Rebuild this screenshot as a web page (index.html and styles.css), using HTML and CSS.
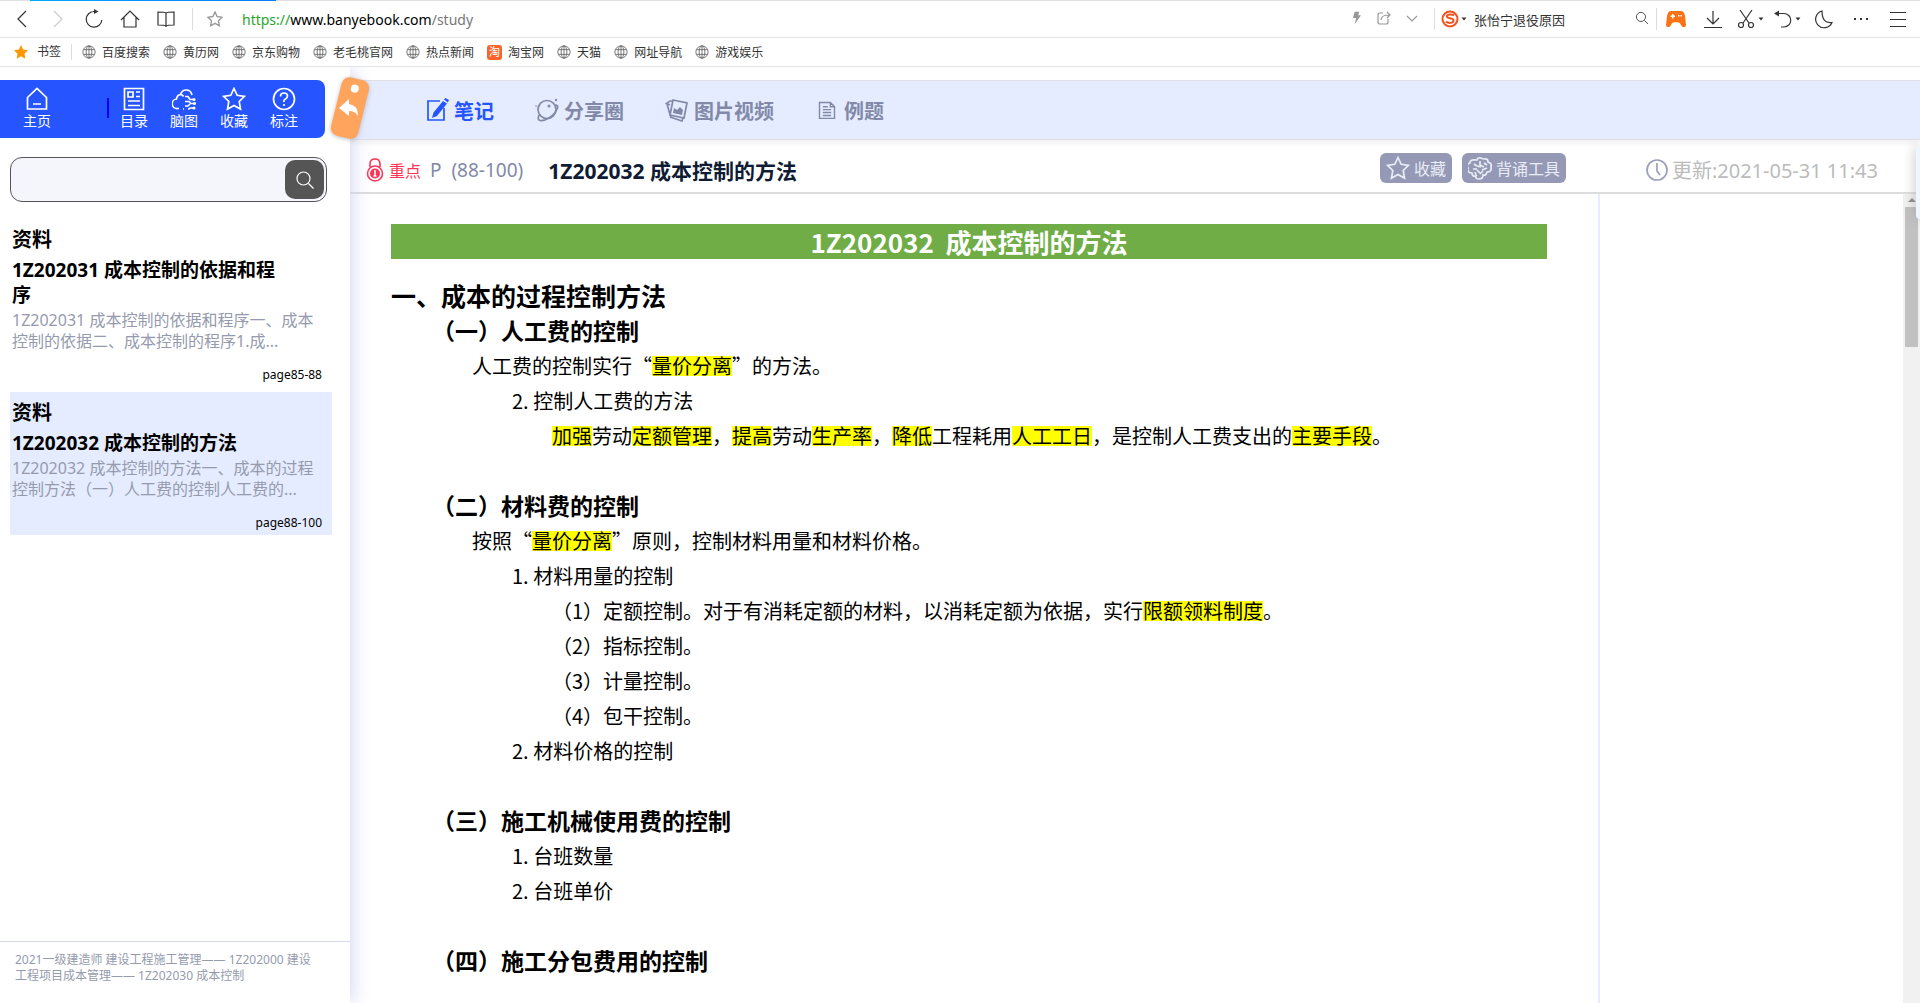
FILE: index.html
```html
<!DOCTYPE html>
<html lang="zh-CN">

<head>
    <meta charset="UTF-8">
    <title>1Z202032 成本控制的方法</title>
    <link rel="stylesheet" href="styles.css">
</head>

<body>

    <!-- shared icons -->
    <svg class="sprite" aria-hidden="true">
        <symbol id="globe" viewBox="0 0 16 16">
            <circle cx="8" cy="8" r="7" />
            <ellipse cx="8" cy="8" rx="3.3" ry="7" />
            <path d="M8 1v14M1.8 5.3h12.4M1.8 10.7h12.4" />
        </symbol>
        <symbol id="star" viewBox="0 0 24 24">
            <path d="M12 1.5l3.2 6.8 7.3 1-5.3 5.2 1.3 7.6-6.5-3.6-6.5 3.6 1.3-7.6L1.5 9.3l7.3-1z" />
        </symbol>
        <symbol id="search" viewBox="0 0 20 20">
            <circle cx="8.5" cy="8.5" r="6.5" />
            <path d="M13.5 13.5l5 5" />
        </symbol>
        <symbol id="caret" viewBox="0 0 6 4">
            <path d="M0.5 0.5h5L3 3.5z" />
        </symbol>
    </svg>

    <header class="browser">
        <div class="loading"></div>
        <div class="toolbar">
            <button class="tool" aria-label="后退"><svg class="icon" viewBox="0 0 20 20"><path d="M14 2L6 10l8 8" /></svg></button>
            <button class="tool off" aria-label="前进"><svg class="icon" viewBox="0 0 20 20"><path d="M6 2l8 8-8 8" /></svg></button>
            <button class="tool" aria-label="刷新"><svg class="icon" viewBox="0 0 20 20"><path d="M10 2.5a7.8 7.8 0 1 0 7.8 8.5M9 2.5h4" /><path class="fill" d="M10 0l4.5 2.5L10 5z" /></svg></button>
            <button class="tool" aria-label="主页"><svg class="icon" viewBox="0 0 20 20"><path d="M1 11l9-9 9 9M4 8.5v9.5h12V8.5" /></svg></button>
            <button class="tool" aria-label="阅读"><svg class="icon" viewBox="0 0 20 20"><path d="M10 4c-1-1-2-1-8-1v13c6 0 7 0 8 1 1-1 2-1 8-1V3c-6 0-7 0-8 1zv14" /></svg></button>
            <span class="line"></span>
            <button class="tool pale" aria-label="收藏本页"><svg class="icon small"><use href="#star" /></svg></button>
            <div class="url"><span class="scheme">https://</span>www.banyebook.com<span class="path">/study</span></div>
            <button class="mini" aria-label="极速"><svg class="bolt" viewBox="0 0 10 14"><path d="M3 0h5L7 4h3L3 14l1.5-7H1z" /></svg></button>
            <button class="mini pale" aria-label="分享"><svg class="icon mid" viewBox="0 0 14 14"><path d="M6 2H3Q1 2 1 4v7q0 2 2 2h6q2 0 2-2V8M4 9q0-5 8-5M10 1l3 3-3 3" /></svg></button>
            <button class="mini pale" aria-label="更多"><svg class="icon mid" viewBox="0 0 14 14"><path d="M2 5l5 5 5-5" /></svg></button>
            <span class="line"></span>
            <svg class="sogou" viewBox="0 0 18 18"><circle cx="9" cy="9" r="7.5" /><path d="M13 5.5c-2-1.5-7-1.5-7 1s6.5 1 6.5 4-5.5 3-7.5 1" /></svg>
            <svg class="caret"><use href="#caret" /></svg>
            <input class="websearch" type="text" value="张怡宁退役原因" aria-label="网页搜索">
            <button class="mini" aria-label="搜索"><svg class="icon mid"><use href="#search" /></svg></button>
            <span class="line tight"></span>
            <button class="ext" aria-label="游戏"><svg class="game" viewBox="0 0 20 16"><path d="M5 0h10q3 0 4 5l1 9q0 2-3 2-1 0-2-2-1-3-5-3t-5 3q-1 2-2 2-3 0-3-2l1-9q1-5 4-5z" /><path class="white" d="M6 3h1.5v1.5H9V6H7.5v1.500H6V6H4.500V4.500H6zM12 4h1.500v1.500H12zM14.500 4H16v1.500h-1.500z" /></svg></button>
            <button class="ext" aria-label="下载"><svg class="icon" viewBox="0 0 20 20"><path d="M10 2v13M4 9l6 6 6-6M1 18.500h18" /></svg></button>
            <button class="ext" aria-label="截图"><svg class="icon" viewBox="0 0 20 20"><path d="M4 1l9 13M16 1L7 14" /><circle cx="5" cy="16" r="2.5" /><circle cx="15" cy="16" r="2.5" /></svg><svg class="caret"><use href="#caret" /></svg></button>
            <button class="ext" aria-label="恢复"><svg class="icon" viewBox="0 0 20 20"><path d="M3 4.500h8a6.500 6.500 0 0 1 0 13.500H8" /><path class="fill" d="M6 1.500v6L1 4.500z" /></svg><svg class="caret"><use href="#caret" /></svg></button>
            <button class="ext" aria-label="夜间"><svg class="icon" viewBox="0 0 20 20"><path d="M8 2a8.500 8.500 0 1 0 10 11.500Q8 15 8 2z" /></svg></button>
            <button class="ext" aria-label="扩展"><svg class="icon dots" viewBox="0 0 20 20"><path d="M3 9h2v2H3zM9 9h2v2H9zM15 9h2v2h-2z" /></svg></button>
            <button class="ext" aria-label="菜单"><svg class="icon" viewBox="0 0 20 20"><path d="M2 3.500h16M2 10.500h16M2 17.500h16" /></svg></button>
        </div>
        <nav class="bookmarks">
            <a href="#" class="first"><svg class="favstar"><use href="#star" /></svg>书签</a>
            <a href="#"><svg class="icon globe"><use href="#globe" /></svg>百度搜索</a>
            <a href="#"><svg class="icon globe"><use href="#globe" /></svg>黄历网</a>
            <a href="#"><svg class="icon globe"><use href="#globe" /></svg>京东购物</a>
            <a href="#"><svg class="icon globe"><use href="#globe" /></svg>老毛桃官网</a>
            <a href="#"><svg class="icon globe"><use href="#globe" /></svg>热点新闻</a>
            <a href="#"><span class="taobao">淘</span>淘宝网</a>
            <a href="#"><svg class="icon globe"><use href="#globe" /></svg>天猫</a>
            <a href="#"><svg class="icon globe"><use href="#globe" /></svg>网址导航</a>
            <a href="#"><svg class="icon globe"><use href="#globe" /></svg>游戏娱乐</a>
        </nav>
    </header>

    <div class="app">
        <aside class="sidebar">
            <nav class="menu">
                <a href="#" class="home"><svg class="icon" viewBox="0 0 24 24"><path d="M2.500 10.500L12 1.500l9.500 9V22h-19zM8 17h8" /></svg>主页</a>
                <span class="split"></span>
                <a href="#"><svg class="icon" viewBox="0 0 24 24"><path d="M2.500 1.500h19v21h-19zM6 5h5v5H6zM14 5h4M14 9.500h4M6 14h12M6 18.500h12" /></svg>目录</a>
                <a href="#"><svg class="icon" viewBox="0 0 24 24"><path d="M7 21.500H5.500a4.700 4.700 0 0 1-1-9.500Q5 8 8.500 7.500 10 3 14 3q5 0 6 5M8.500 7.500q2 0 3 2M13 9.500h3l2 3h3M13 14.500h4l2 2h3M13 19h3l2-2M11 22h1M16 22h1l1-1h3" /><circle cx="22" cy="12.500" r="0.700" /><circle cx="22.500" cy="16.500" r="0.700" /><circle cx="22" cy="21" r="0.700" /></svg>脑图</a>
                <a href="#"><svg class="icon"><use href="#star" /></svg>收藏</a>
                <a href="#"><svg class="icon" viewBox="0 0 24 24"><circle cx="12" cy="12" r="10.500" /><path d="M8.500 9.500q0-3.500 3.500-3.500t3.500 3q0 2-2 3T12 15M12 17v2" /></svg>标注</a>
            </nav>

            <form class="search">
                <input type="text" aria-label="搜索资料">
                <button type="button" aria-label="搜索"><svg class="icon"><use href="#search" /></svg></button>
            </form>

            <div class="list">
                <article class="item">
                    <h3>资料</h3>
                    <h4>1Z202031 成本控制的依据和程序</h4>
                    <p>1Z202031 成本控制的依据和程序一、成本控制的依据二、成本控制的程序1.成...</p>
                    <span class="page">page85-88</span>
                </article>
                <article class="item active">
                    <h3>资料</h3>
                    <h4>1Z202032 成本控制的方法</h4>
                    <p>1Z202032 成本控制的方法一、成本的过程控制方法（一）人工费的控制人工费的...</p>
                    <span class="page">page88-100</span>
                </article>
            </div>

            <footer class="crumbs">2021一级建造师 建设工程施工管理—— 1Z202000 建设工程项目成本管理—— 1Z202030 成本控制</footer>

            <button class="tag" aria-label="收起">
                <svg viewBox="0 0 40 64">
                    <g transform="rotate(14 20 32)">
                        <rect class="body" x="6" y="2" width="28" height="60" rx="8" />
                        <circle class="white" cx="20" cy="12" r="4" />
                    </g>
                    <path class="white" d="M9 32l10-9v5q9 1 9 12-3-5-9-5v5z" />
                </svg>
            </button>
        </aside>

        <main class="main">
            <nav class="tabs">
                <a href="#" class="active"><svg class="icon" viewBox="0 0 24 24"><path d="M15 3H3v19h16V10" /><path class="fill" d="M18 3l4 2.500L12 18l-5 2 1.500-5.500zM19 1.500l1.500-1.500 3.500 2-1.200 2.500z" /></svg>笔记</a>
                <a href="#"><svg class="icon" viewBox="0 0 24 24"><circle cx="12" cy="11.500" r="9" /><path d="M20 7q4 0 2 4-2 5-8 9-7 4-10 2-2-2 1-6" /><circle class="fill" cx="14" cy="8" r="1.500" /><circle class="fill" cx="21" cy="2" r="1.200" /><circle class="fill" cx="1" cy="8" r="0.800" /></svg>分享圈</a>
                <a href="#"><svg class="icon" viewBox="0 0 24 24"><path d="M8 2l14 3-3 15-14-3zM5 7L1.500 5.500 5 3h2M2 6l4 14M5 19l12 4 1-3" /><path class="fill" d="M8 15l1-5 3 2 3-3 3 3-1 5z" /></svg>图片视频</a>
                <a href="#"><svg class="icon page-icon" viewBox="0 0 24 24"><path d="M3 3h13l5 5v14H3zM16 3v5h5M7 8h6M7 11.500h10M7 15h10M7 18.500h10" /></svg>例题</a>
            </nav>

            <div class="titlebar">
                <svg class="lock" viewBox="0 0 20 24"><path d="M5 9V6q0-5 5-5t5 5v3" /><circle cx="10" cy="15.500" r="7.500" /><circle class="fill" cx="10" cy="15.500" r="5" /><path class="bar" d="M9 13h1v5M8.500 18h3" /></svg>
                <span class="key">重点</span>
                <span class="pages">P&nbsp; (88-100)</span>
                <h1>1Z202032 成本控制的方法</h1>
                <button class="pill"><svg class="icon"><use href="#star" /></svg>收藏</button>
                <button class="pill"><svg class="icon" viewBox="0 0 24 24"><path d="M9 4q1-3 3.500-2T16 3q4-1 4 3 4 1 3 5 1 5-4 5-1 4-4 3 0 4-4 4t-3-3q-4 1-4-3-5 0-4-5-2-4 2-5 0-4 6-3zM6 8l3 2M5 13h4M12 5v4l4 2M9 14l3 3M14 14l5-2M16 7l3 2M12 18l3-3M9 10l4 1M7 16l1 3" /></svg>背诵工具</button>
                <div class="updated"><svg class="icon" viewBox="0 0 24 24"><circle cx="12" cy="12" r="10" /><path d="M12 5v8l3 4" /></svg>更新:2021-05-31 11:43</div>
            </div>

            <div class="reader">
                <div class="note">
                    <h2>1Z202032&nbsp; 成本控制的方法</h2>
                    <h3>一、成本的过程控制方法</h3>
                    <h4>（一）人工费的控制</h4>
                    <p>人工费的控制实行“<mark>量价分离</mark>”的方法。</p>
                    <p class="in1">2. 控制人工费的方法</p>
                    <p class="in2"><mark>加强</mark>劳动<mark>定额管理</mark>，<mark>提高</mark>劳动<mark>生产率</mark>，<mark>降低</mark>工程耗用<mark>人工工日</mark>，是控制人工费支出的<mark>主要手段</mark>。</p>
                    <h4 class="next">（二）材料费的控制</h4>
                    <p>按照“<mark>量价分离</mark>”原则，控制材料用量和材料价格。</p>
                    <p class="in1">1. 材料用量的控制</p>
                    <p class="in2">（1）定额控制。对于有消耗定额的材料，以消耗定额为依据，实行<mark>限额领料制度</mark>。</p>
                    <p class="in2">（2）指标控制。</p>
                    <p class="in2">（3）计量控制。</p>
                    <p class="in2">（4）包干控制。</p>
                    <p class="in1">2. 材料价格的控制</p>
                    <h4 class="next">（三）施工机械使用费的控制</h4>
                    <p class="in1">1. 台班数量</p>
                    <p class="in1">2. 台班单价</p>
                    <h4 class="next">（四）施工分包费用的控制</h4>
                </div>
                <div class="margin"></div>
                <div class="scrollbar"><span class="up"></span><span class="thumb"></span></div>
            </div>
            <div class="drawer"></div>
        </main>
    </div>

</body>

</html>
```
FILE: styles.css
```css
* {
    box-sizing: border-box;
}

body {
    margin: 0;
    height: 100vh;
    display: flex;
    flex-direction: column;
    overflow: hidden;
    font-family: "Noto Sans", "Noto Sans CJK SC", sans-serif;
    color: #000;
    background: #fff;
}

h1, h2, h3, h4, p {
    margin: 0;
}

a {
    color: inherit;
    text-decoration: none;
}

button {
    border: none;
    background: none;
    padding: 0;
    font-family: inherit;
    color: inherit;
    cursor: pointer;
}

.sprite {
    display: none;
}

.icon {
    width: 20px;
    height: 20px;
    fill: none;
    stroke: currentColor;
    stroke-width: 1.2;
    flex: none;
}

.fill {
    fill: currentColor;
    stroke: none;
}

.white {
    fill: #fff;
}

/* browser bar */
.browser {
    flex: none;
    border-bottom: 1px solid #e3e3e3;
}

.loading {
    height: 1px;
    background: linear-gradient(90deg, #00a8ff, #0a7cff) 30px 0 / 246px 1px no-repeat #e0e0e0;
}

.toolbar {
    height: 37px;
    display: flex;
    align-items: center;
    padding: 0 4px;
    border-bottom: 1px solid #e3e3e3;
    color: #333;
}

.tool {
    width: 36px;
    height: 20px;
    display: flex;
    justify-content: center;
}

.off {
    color: #ccc;
}

.pale {
    color: #999;
}

.line {
    width: 1px;
    height: 22px;
    margin: 0 4px 0 8px;
    background: #ddd;
}

.tight {
    margin: 0;
}

.small {
    width: 16px;
    height: 16px;
    margin-top: 2px;
    stroke-width: 2;
}

.url {
    flex: 1;
    font-size: 14px;
    color: #000;
    margin-left: 9px;
}

.scheme {
    color: #2ba52b;
}

.path {
    color: #777;
}

.mini {
    width: 28px;
    height: 16px;
    display: flex;
    justify-content: center;
}

.mid {
    width: 14px;
    height: 14px;
}

.bolt {
    width: 9px;
    height: 14px;
    fill: #999;
}

.sogou {
    width: 18px;
    height: 18px;
    margin-left: 2px;
    fill: none;
    stroke: #f4511e;
    stroke-width: 2;
}

.caret {
    width: 6px;
    height: 4px;
    margin-left: 2px;
    fill: #333;
}

.websearch {
    width: 154px;
    border: none;
    padding: 0;
    margin-left: 7px;
    font: 13px "Noto Sans CJK SC", sans-serif;
    color: #333;
}

.ext {
    width: 37px;
    height: 20px;
    display: flex;
    align-items: center;
    justify-content: center;
}

.game {
    width: 20px;
    height: 16px;
    fill: #f97316;
}

.dots {
    fill: #333;
    stroke: none;
}

.bookmarks {
    height: 28px;
    display: flex;
    align-items: center;
    gap: 13px;
    padding-left: 13px;
    font-size: 12px;
    color: #333;
}

.bookmarks a {
    display: flex;
    align-items: center;
    gap: 6px;
}

.bookmarks .first {
    gap: 8px;
    padding-right: 10px;
    margin-right: -3px;
    border-right: 1px solid #ddd;
    line-height: 16px;
}

.favstar {
    width: 16px;
    height: 16px;
    fill: #ff9800;
}

.globe {
    width: 14px;
    height: 14px;
    color: #666;
    stroke-width: 1;
}

.taobao {
    width: 15px;
    height: 15px;
    border-radius: 3px;
    background: #f9632c;
    color: #fff;
    font-size: 11px;
    line-height: 14px;
    text-align: center;
}

/* page */
.app {
    flex: 1;
    min-height: 0;
    display: flex;
}

.sidebar {
    position: relative;
    z-index: 2;
    width: 350px;
    flex: none;
    display: flex;
    flex-direction: column;
    padding-top: 13px;
    background: #fff;
    box-shadow: 0 0 20px #c9cef0;
    clip-path: inset(0 -24px 0 0);
}

.menu {
    height: 58px;
    width: 325px;
    display: flex;
    align-items: center;
    padding: 0 0 2px 12px;
    background: #2655ff;
    border-radius: 0 8px 8px 0;
    color: #fff;
    font-size: 14px;
    line-height: 18px;
}

.menu a {
    width: 50px;
    display: flex;
    flex-direction: column;
    align-items: center;
    gap: 1px;
}

.menu .icon {
    width: 24px;
    height: 24px;
    stroke-width: 1.7;
}

.split {
    width: 2px;
    height: 20px;
    margin: 0 0 0 45px;
    background: #0000ff;
}

.search {
    display: flex;
    margin: 19px 23px 0 10px;
    height: 45px;
    padding: 2px;
    border: 1px solid #555;
    border-radius: 12px;
    background: #f4f6fb;
}

.search input {
    flex: 1;
    min-width: 0;
    border: none;
    outline: none;
    background: none;
    padding: 0 10px;
    font-size: 16px;
}

.search button {
    width: 39px;
    height: 39px;
    border-radius: 10px;
    background: #555;
    color: #fff;
    display: flex;
    align-items: center;
    justify-content: center;
}

.list {
    flex: 1;
    margin: 17px 18px 0 10px;
    display: flex;
    flex-direction: column;
    gap: 5px;
}

.item {
    display: flex;
    flex-direction: column;
    padding: 5px 10px 3px 2px;
}

.item.active {
    background: #e5ecff;
}

.item h3 {
    font-size: 20px;
    line-height: 32px;
}

.item h4 {
    font-size: 19px;
    line-height: 25px;
    width: 280px;
    padding: 2px 0;
}

.item p {
    font-size: 16px;
    line-height: 21px;
    color: #959bad;
    margin-bottom: 14px;
}

.page {
    align-self: flex-end;
    font-size: 12px;
    line-height: 18px;
}

.crumbs {
    border-top: 1px solid #d5d8ea;
    padding: 10px 31px 19px 15px;
    font-size: 12px;
    line-height: 16px;
    color: #959bad;
}

.tag {
    position: absolute;
    left: 330px;
    top: 9px;
    width: 40px;
    height: 64px;
}

.tag svg {
    width: 40px;
    height: 64px;
    overflow: visible;
    filter: drop-shadow(0 1px 2px #bbb);
}

.tag .body {
    fill: #ffa45c;
}

.main {
    position: relative;
    flex: 1;
    min-width: 0;
    display: flex;
    flex-direction: column;
    padding-top: 13px;
}

.tabs {
    height: 60px;
    flex: none;
    display: flex;
    align-items: center;
    gap: 41px;
    padding-left: 75px;
    border-top: 1px solid #dfe0e4;
    border-bottom: 1px solid #dfe0e4;
    background: #e5ecff;
    box-shadow: 0 4px 4px #f3f3f3;
    font-size: 20px;
    font-weight: bold;
    color: #8289a8;
}

.tabs a {
    display: flex;
    align-items: center;
    gap: 5px;
}

.tabs .active {
    color: #2655ff;
}

.tabs .icon {
    width: 24px;
    height: 24px;
    stroke-width: 1.7;
}

.tabs .page-icon {
    height: 20px;
}

.titlebar {
    height: 47px;
    flex: none;
    margin-top: 7px;
    padding: 0 42px 0 15px;
    display: flex;
    align-items: center;
    border-bottom: 2px solid #ddd;
}

.lock {
    width: 20px;
    height: 24px;
    fill: none;
    stroke: #ff3355;
    stroke-width: 1.6;
}

.lock .fill {
    fill: #ff3355;
}

.lock .bar {
    stroke: #fff;
}

.key {
    margin-left: 4px;
    font-size: 16px;
    color: #ff3355;
}

.pages {
    margin-left: 9px;
    font-size: 19px;
    color: #8289a8;
}

.titlebar h1 {
    flex: 1;
    margin-left: 25px;
    font-size: 21px;
    color: #101c33;
}

.pill {
    display: flex;
    align-items: center;
    gap: 4px;
    height: 30px;
    margin: 0 10px 4px 0;
    padding: 0 6px;
    border-radius: 6px;
    background: #9599b5;
    color: #e9edf8;
    font-size: 16px;
}

.pill .icon,
.updated .icon {
    width: 24px;
    height: 24px;
    stroke-width: 1.7;
}

.updated {
    display: flex;
    align-items: center;
    gap: 3px;
    margin-left: 69px;
    font-size: 20px;
    color: #bbb;
}

.updated .icon {
    color: #9aa0b8;
}

.reader {
    flex: 1;
    min-height: 0;
    display: flex;
    overflow: hidden;
}

.note {
    flex: 1;
    padding: 30px 51px 0 41px;
    font-family: "Noto Sans CJK SC", sans-serif;
    font-size: 20px;
    line-height: 35px;
}

.note h2 {
    margin-bottom: 19px;
    background: #70ad47;
    color: #fff;
    font-size: 26px;
    line-height: 35px;
    text-align: center;
}

.note h3 {
    font-size: 25px;
}

.note h4 {
    padding-left: 41px;
    font-size: 23px;
}

.note .next {
    margin-top: 35px;
}

.note p {
    height: 35px;
    padding-left: 81px;
}

.note .in1 {
    padding-left: 121px;
}

.note .in2 {
    padding-left: 161px;
}

mark {
    display: inline-block;
    background: #ff0;
    line-height: 20px;
}

.margin {
    width: 305px;
    border-left: 2px solid #e5ecff;
}

.scrollbar {
    width: 17px;
    padding: 4px 2px;
    background: #f1f1f1;
}

.up {
    display: block;
    margin: 0 auto 5px;
    width: 8px;
    border: 4px solid transparent;
    border-top: none;
    border-bottom-color: #888;
}

.thumb {
    display: block;
    height: 140px;
    background: #c1c1c1;
}

.drawer {
    position: absolute;
    right: 0;
    top: 80px;
    width: 4px;
    height: 72px;
    border-radius: 4px 0 0 4px;
    background: #f0f6ff;
    box-shadow: 0 0 12px #999;
}
```
